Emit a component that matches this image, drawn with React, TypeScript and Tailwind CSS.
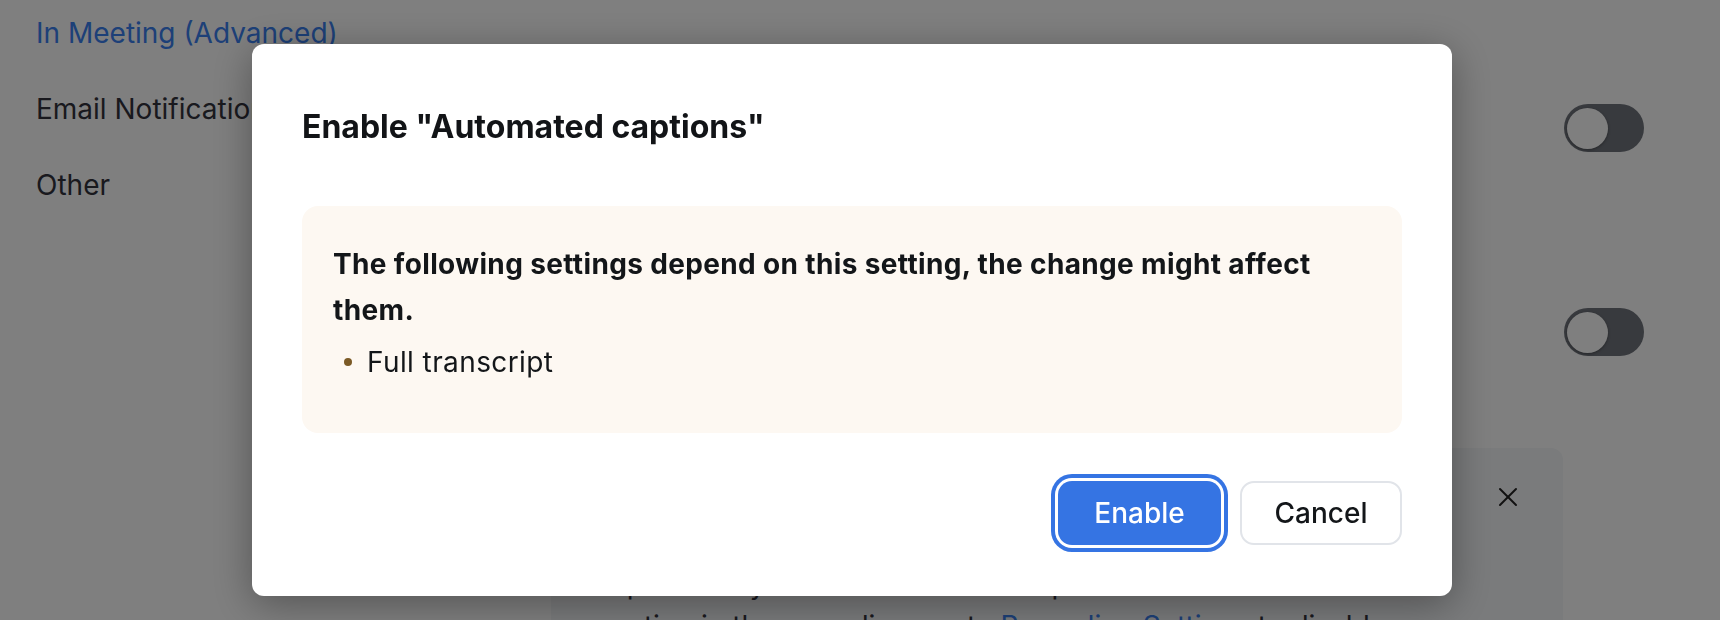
import { X } from 'lucide-react';

function Toggle() {
  return (
    <div className="flex h-[48px] w-[80px] items-center rounded-full bg-[#70747c] px-[3px]">
      <div className="h-[41px] w-[41px] rounded-full bg-white shadow-[0_1px_3px_rgba(0,0,0,0.35)]" />
    </div>
  );
}

export default function App() {
  return (
    <div className="relative h-[620px] w-full overflow-hidden bg-white font-['Inter',sans-serif] text-[28px] text-[#33333d]">
      {/* settings page behind the dialog */}
      <div className="flex h-full">
        <aside className="flex w-[551px] shrink-0 flex-col gap-[36px] pl-[36px] pt-[13px] leading-[40px]">
          <a href="#" className="text-[#3a80f0]">
            In Meeting (Advanced)
          </a>
          <span>Email Notification</span>
          <span>Other</span>
        </aside>

        <main className="flex flex-1 flex-col pr-[76px] pt-[104px]">
          <div className="flex h-[48px] items-center justify-between">
            <span>Automated captions</span>
            <Toggle />
          </div>
          <div className="mt-[156px] flex h-[48px] items-center justify-between">
            <span>Full transcript</span>
            <Toggle />
          </div>

          <div className="mt-[92px] flex h-[220px] w-[1012px] rounded-[12px] bg-[#f4f6f8]">
            <div className="flex-1 pl-[59px] pt-[31px] leading-[42px]">
              <p>Automated captions will be saved with the cloud</p>
              <p>recording when full transcript is enabled for your</p>
              <p>options. If you do not want to keep the saved</p>
              <p>
                option in the recording, go to{' '}
                <a href="#" className="text-[#3a80f0]">
                  Recording Settings
                </a>{' '}
                to disable
              </p>
            </div>
            <div className="pr-[39px] pt-[33px]">
              <X className="h-[32px] w-[32px] text-[#222]" strokeWidth={1.5} />
            </div>
          </div>
        </main>
      </div>

      {/* overlay + dialog */}
      <div className="fixed inset-0 flex items-start bg-black/50 pl-[252px] pt-[44px]">
        <div className="flex h-[552px] w-[1200px] flex-col rounded-[12px] bg-white px-[50px] pt-[63px] shadow-[0_8px_40px_rgba(0,0,0,0.35)]">
          <h2 className="text-[32px] font-bold leading-[40px] text-[#121417]">
            Enable "Automated captions"
          </h2>

          <div className="mt-[59px] rounded-[16px] bg-[#fdf8f2] px-[31px] pb-[48px] pt-[35px] text-[#131619]">
            <p className="font-bold leading-[46px] tracking-[0.35px]">
              The following settings depend on this setting, the change might affect them.
            </p>
            <ul className="mt-[6px] leading-[46px] tracking-[0.4px]">
              <li className="flex items-center">
                <span className="ml-[11px] mr-[15px] h-[8px] w-[8px] rounded-full bg-[#7b5a26]" />
                Full transcript
              </li>
            </ul>
          </div>

          <div className="mt-[48px] flex justify-end gap-[19px]">
            <button className="h-[64px] w-[163px] rounded-[14px] bg-[#3574e3] font-medium text-white ring-[4px] ring-[#3574e3] ring-offset-[3px] ring-offset-white">
              Enable
            </button>
            <button className="h-[64px] w-[162px] rounded-[14px] border-2 border-[#e1e4e9] bg-white font-medium text-[#131619]">
              Cancel
            </button>
          </div>
        </div>
      </div>
    </div>
  );
}
